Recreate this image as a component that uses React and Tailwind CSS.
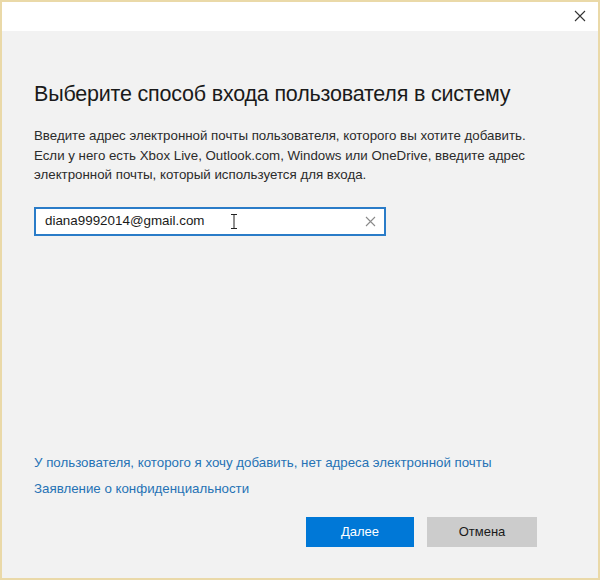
import React from "react";

const font = { fontFamily: '"Liberation Sans", Arial, sans-serif' };

export default function App() {
  return (
    <div
      className="w-[600px] h-[580px] bg-[#f2f2f2] border-2 border-[#ead9a8] flex flex-col text-[#1a1a1a]"
      style={font}
    >
      {/* Title bar */}
      <div className="h-[29px] bg-white flex justify-end items-center pr-[12px] shrink-0">
        <svg width="12" height="12" viewBox="0 0 12 12" className="mt-[-1px]">
          <path d="M1 1 L11 11 M11 1 L1 11" stroke="#333" strokeWidth="1.1" />
        </svg>
      </div>

      <div className="flex-1 flex flex-col px-[32px]">
        <h1 className="mt-[49px] text-[21.5px] font-normal leading-[28px] tracking-[-0.2px] text-[#1a1a1a]">
          Выберите способ входа пользователя в систему
        </h1>

        <p className="mt-[18px] text-[13.3px] leading-[19.5px] text-[#2b2b2b]">
          Введите адрес электронной почты пользователя, которого вы хотите добавить.
          <br />
          Если у него есть Xbox Live, Outlook.com, Windows или OneDrive, введите адрес
          <br />
          электронной почты, который используется для входа.
        </p>

        <div className="mt-[22px] w-[352px] h-[29px] bg-white border-2 border-[#2a7cc8] flex items-center pl-[9px] pr-[8px] relative">
          <span className="text-[13.4px] text-[#1a1a1a]">diana9992014@gmail.com</span>
          <svg
            width="8"
            height="15"
            viewBox="0 0 8 15"
            className="absolute left-[194px] top-[5px]"
          >
            <path d="M1 0.5 H7 M4 0.5 V14.5 M1 14.5 H7" stroke="#222" strokeWidth="1" />
          </svg>
          <svg width="11" height="11" viewBox="0 0 11 11" className="ml-auto">
            <path d="M1 1 L10 10 M10 1 L1 10" stroke="#8a8a8a" strokeWidth="1.1" />
          </svg>
        </div>

        <div className="mt-auto flex flex-col gap-[8px] text-[13.3px] leading-[18px] text-[#2672b5]">
          <span>У пользователя, которого я хочу добавить, нет адреса электронной почты</span>
          <span>Заявление о конфиденциальности</span>
        </div>

        <div className="mt-[19px] mb-[31px] flex justify-end gap-[13px] pr-[29px]">
          <button className="w-[108px] h-[30px] bg-[#0078d7] text-white text-[13px]">
            Далее
          </button>
          <button className="w-[110px] h-[30px] bg-[#cccccc] text-[#1a1a1a] text-[13px]">
            Отмена
          </button>
        </div>
      </div>
    </div>
  );
}
